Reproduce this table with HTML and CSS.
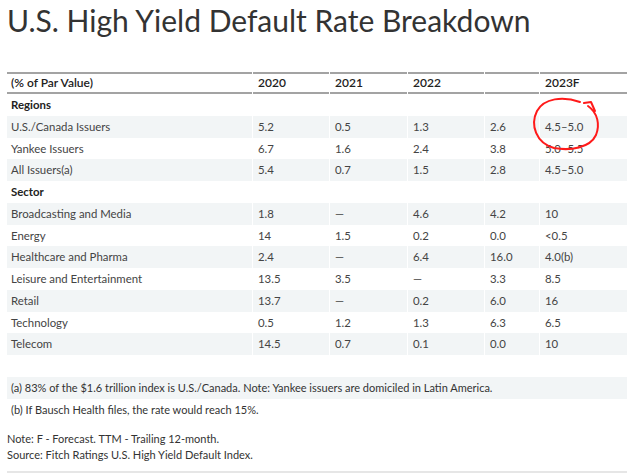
FILE: index.html
```html
<!DOCTYPE html>
<html lang="en">
<head>
<meta charset="utf-8">
<title>U.S. High Yield Default Rate Breakdown</title>
<link rel="stylesheet" href="styles.css">
</head>
<body>
<h1 class="title">U.S. High Yield Default Rate Breakdown</h1>
<div class="table-wrap">
<table class="data">
  <colgroup>
    <col class="c-label"><col class="c-y1"><col class="c-y2"><col class="c-y3"><col class="c-ttm"><col class="c-f">
  </colgroup>
  <thead>
    <tr><th>(% of Par Value)</th><th>2020</th><th>2021</th><th>2022</th><th></th><th>2023F</th></tr>
  </thead>
  <tbody>
    <tr class="group"><td>Regions</td><td></td><td></td><td></td><td></td><td></td></tr>
    <tr class="alt"><td>U.S./Canada Issuers</td><td>5.2</td><td>0.5</td><td>1.3</td><td>2.6</td><td>4.5–5.0</td></tr>
    <tr><td>Yankee Issuers</td><td>6.7</td><td>1.6</td><td>2.4</td><td>3.8</td><td>5.0–5.5</td></tr>
    <tr class="alt"><td>All Issuers(a)</td><td>5.4</td><td>0.7</td><td>1.5</td><td>2.8</td><td>4.5–5.0</td></tr>
    <tr class="group"><td>Sector</td><td></td><td></td><td></td><td></td><td></td></tr>
    <tr class="alt"><td>Broadcasting and Media</td><td>1.8</td><td>—</td><td>4.6</td><td>4.2</td><td>10</td></tr>
    <tr><td>Energy</td><td>14</td><td>1.5</td><td>0.2</td><td>0.0</td><td>&lt;0.5</td></tr>
    <tr class="alt"><td>Healthcare and Pharma</td><td>2.4</td><td>—</td><td>6.4</td><td>16.0</td><td>4.0(b)</td></tr>
    <tr><td>Leisure and Entertainment</td><td>13.5</td><td>3.5</td><td>—</td><td>3.3</td><td>8.5</td></tr>
    <tr class="alt"><td>Retail</td><td>13.7</td><td>—</td><td>0.2</td><td>6.0</td><td>16</td></tr>
    <tr><td>Technology</td><td>0.5</td><td>1.2</td><td>1.3</td><td>6.3</td><td>6.5</td></tr>
    <tr class="alt"><td>Telecom</td><td>14.5</td><td>0.7</td><td>0.1</td><td>0.0</td><td>10</td></tr>
  </tbody>
</table>
<svg class="scribble" width="80" height="60" viewBox="525 95 80 60" aria-hidden="true">
  <path d="M580 102 C563 96 544 98 537 111 C530 125 536 143 554 148 C570 151 590 148 596 135 C600 125 598 113 588 106 M584 103 L591 102 L595 111" fill="none" stroke="#ff1a1a" stroke-width="2" stroke-linecap="round" stroke-linejoin="round"/>
</svg>
</div>
<div class="footnotes">
  <p class="fn alt">(a) 83% of the $1.6 trillion index is U.S./Canada. Note: Yankee issuers are domiciled in Latin America.</p>
  <p class="fn">(b) If Bausch Health files, the rate would reach 15%.</p>
</div>
<p class="source">Note: F - Forecast. TTM - Trailing 12-month.<br>Source: Fitch Ratings U.S. High Yield Default Index.</p>
<div class="bottom-rule"></div>
</body>
</html>
```
FILE: styles.css
```css
html, body {
  margin: 0;
  padding: 0;
  background: #fff;
}
body {
  padding: 0 13px 0 7px;
  font-family: Lato, "Open Sans", sans-serif;
  color: #333;
}
.title {
  margin: 0;
  font-size: 30px;
  line-height: 40px;
  font-weight: 400;
  color: #333;
}
.table-wrap {
  position: relative;
  margin-top: 32px;
}
.data {
  table-layout: fixed;
  border-collapse: separate;
  border-spacing: 1px 0;
  width: 622px;
  margin-left: -1px;
  font-size: 11.4px;
  color: #444;
}
.c-label { width: 245px; }
.c-y1 { width: 76px; }
.c-y2 { width: 77px; }
.c-y3 { width: 76px; }
.c-ttm { width: 54px; }
.c-f { width: 87px; }
.data th {
  text-align: left;
  font-size: 12px;
  font-weight: 600;
  color: #222;
  padding: 0 5px;
  height: 18px;
  line-height: 18px;
  border-top: 2px solid #a3a3a3;
  border-bottom: 2px solid #a3a3a3;
}
.data td {
  padding: 2px 5px;
  line-height: 17.75px;
  white-space: nowrap;
}
.data th:first-child, .data td:first-child {
  padding-left: 4px;
}
.data tr.alt td {
  background: #f2f5f6;
}
.data tr.group td:first-child {
  font-weight: 700;
  color: #222;
}
.scribble {
  position: absolute;
  left: 518px;
  top: 23px;
}
.footnotes {
  margin-top: 22px;
}
.fn {
  margin: 0;
  padding: 2px 4px;
  line-height: 17.5px;
  font-size: 11px;
  color: #333;
}
.fn.alt {
  background: #f2f5f6;
}
.source {
  margin: 11px 0 0;
  font-size: 11px;
  line-height: 16px;
  color: #333;
}
.bottom-rule {
  margin-top: 8px;
  height: 3px;
  background: #e6e6e6;
}
```
